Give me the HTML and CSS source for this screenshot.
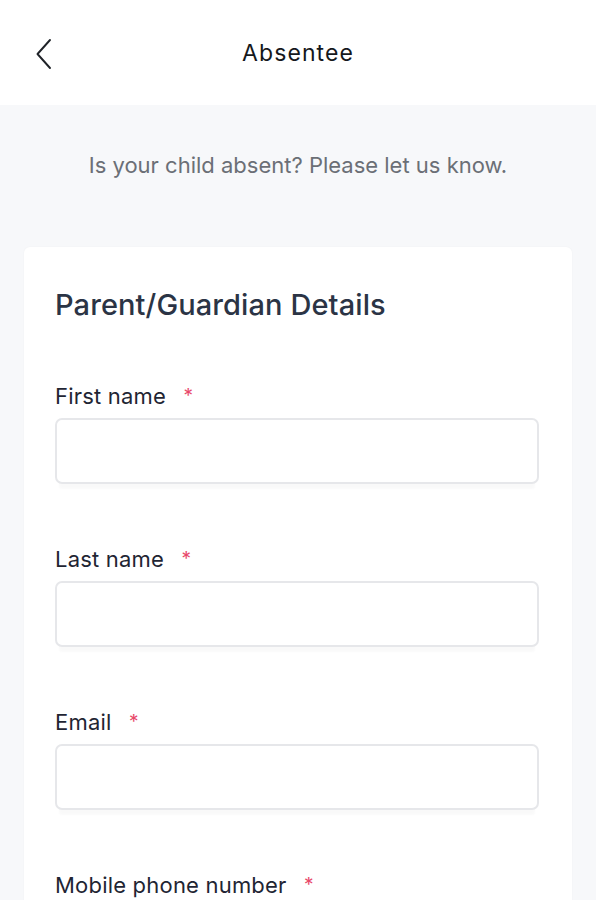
FILE: index.html
```html
<!DOCTYPE html>
<html>
<head>
<meta charset="utf-8">
<link rel="stylesheet" href="styles.css">
</head>
<body>
<header class="topbar">
  <button class="back" aria-label="Back">
    <svg width="18" height="32" viewBox="0 0 18 32"><path d="M15 2 L2.5 16 L15 30" fill="none" stroke="#1f2328" stroke-width="1.9" stroke-linecap="round" stroke-linejoin="round"/></svg>
  </button>
  <h1 class="title">Absentee</h1>
</header>
<main class="page">
  <p class="intro">Is your child absent? Please let us know.</p>
  <section class="card">
    <h2 class="card-title">Parent/Guardian Details</h2>
    <div class="field">
      <label class="label">First name <span class="req">*</span></label>
      <div class="input"></div>
    </div>
    <div class="field">
      <label class="label">Last name <span class="req">*</span></label>
      <div class="input"></div>
    </div>
    <div class="field">
      <label class="label">Email <span class="req">*</span></label>
      <div class="input"></div>
    </div>
    <div class="field">
      <label class="label">Mobile phone number <span class="req">*</span></label>
      <div class="input"></div>
    </div>
  </section>
</main>
</body>
</html>
```
FILE: styles.css
```css
* { box-sizing: border-box; }
html, body { margin: 0; padding: 0; }
body {
  font-family: Inter, "Noto Sans", sans-serif;
  background: #f7f8fa;
  color: #1f2937;
  width: 596px;
  overflow: hidden;
}
.topbar {
  height: 105px;
  background: #ffffff;
  display: flex;
  align-items: center;
  justify-content: center;
  position: relative;
}
.back {
  position: absolute;
  left: 35px;
  top: 38px;
  background: none;
  border: 0;
  padding: 0;
  display: flex;
}
.title {
  margin: 0;
  font-size: 23px;
  font-weight: 400;
  color: #15181c;
  letter-spacing: 1.1px;
  line-height: 30px;
}
.page {
  padding: 0 24px;
}
.intro {
  margin: 0;
  padding-top: 47px;
  text-align: center;
  font-size: 22px;
  color: #6b6f76;
  line-height: 26px;
}
.card {
  margin-top: 69px;
  background: #ffffff;
  border-radius: 6px;
  padding: 40px 33px 40px 31px;
  box-shadow: 0 0 2px rgba(0,0,0,0.04);
}
.card-title {
  margin: 0;
  font-size: 29px;
  font-weight: 500;
  color: #2b3445;
  line-height: 36px;
  letter-spacing: 0.1px;
}
.field {
  margin-top: 63px;
}
.card-title + .field { margin-top: 61px; }
.label {
  display: block;
  font-size: 22px;
  color: #1f2533;
  line-height: 24px;
  letter-spacing: 0.2px;
}
.req {
  color: #e8486a;
  font-size: 19px;
  margin-left: 11px;
  vertical-align: 2px;
}
.input {
  margin-top: 10px;
  height: 66px;
  border: 2px solid #e6e7ea;
  border-radius: 7px;
  background: #fff;
  box-shadow: 0 9px 2px -4px rgba(0,0,0,0.025);
}
```
